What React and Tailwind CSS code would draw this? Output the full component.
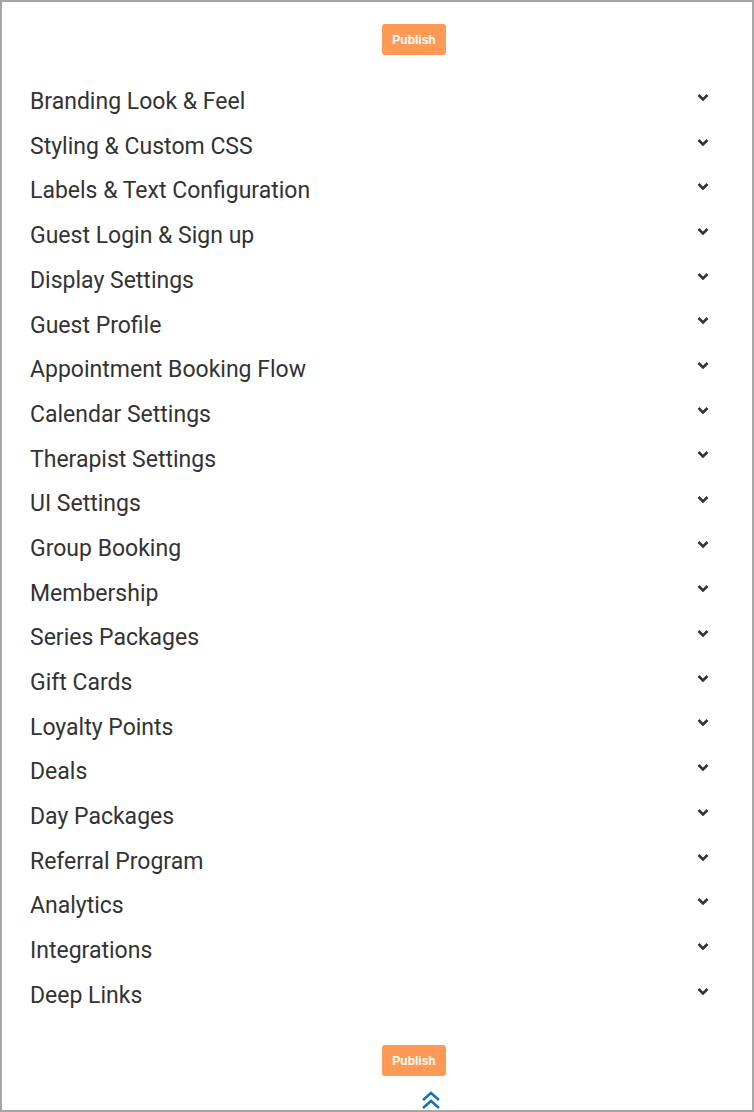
const sections = [
  'Branding Look & Feel',
  'Styling & Custom CSS',
  'Labels & Text Configuration',
  'Guest Login & Sign up',
  'Display Settings',
  'Guest Profile',
  'Appointment Booking Flow',
  'Calendar Settings',
  'Therapist Settings',
  'UI Settings',
  'Group Booking',
  'Membership',
  'Series Packages',
  'Gift Cards',
  'Loyalty Points',
  'Deals',
  'Day Packages',
  'Referral Program',
  'Analytics',
  'Integrations',
  'Deep Links',
];

function ChevronDown() {
  return (
    <svg width="12" height="9" viewBox="0 0 12 9" className="text-[#333]">
      <path d="M1.5 2 L6 6.5 L10.5 2" fill="none" stroke="currentColor" strokeWidth="2.6" />
    </svg>
  );
}

function PublishButton() {
  return (
    <button
      type="button"
      className="h-[31px] w-[64px] rounded-[3px] bg-[#ff9a56] text-[12px] font-bold text-white"
      style={{ fontFamily: '"Liberation Sans", Arial, sans-serif' }}
    >
      Publish
    </button>
  );
}

export default function App() {
  return (
    <div
      className="box-border flex h-[1112px] w-[754px] flex-col border-2 border-[#a6a6a6] bg-white"
      style={{ fontFamily: 'Roboto, "Noto Sans", sans-serif' }}
    >
      <div className="flex justify-center pl-[74px] pt-[22px]">
        <PublishButton />
      </div>
      <ul className="mt-[25px] pl-[28px] pr-[43px]">
        {sections.map((name) => (
          <li key={name} className="flex h-[44.7px] items-center justify-between">
            <span className="text-[23px] text-[#333]">{name}</span>
            <span className="-mt-[10px]">
              <ChevronDown />
            </span>
          </li>
        ))}
      </ul>
      <div className="mt-[27px] flex justify-center pl-[74px]">
        <PublishButton />
      </div>
      <div className="mt-[15px] flex justify-center pl-[108px]">
        <svg width="20" height="18" viewBox="0 0 20 18" className="text-[#1a73b8]">
          <path d="M2 9 L10 2 L18 9 M2 17 L10 10 L18 17" fill="none" stroke="currentColor" strokeWidth="2.6" />
        </svg>
      </div>
    </div>
  );
}
